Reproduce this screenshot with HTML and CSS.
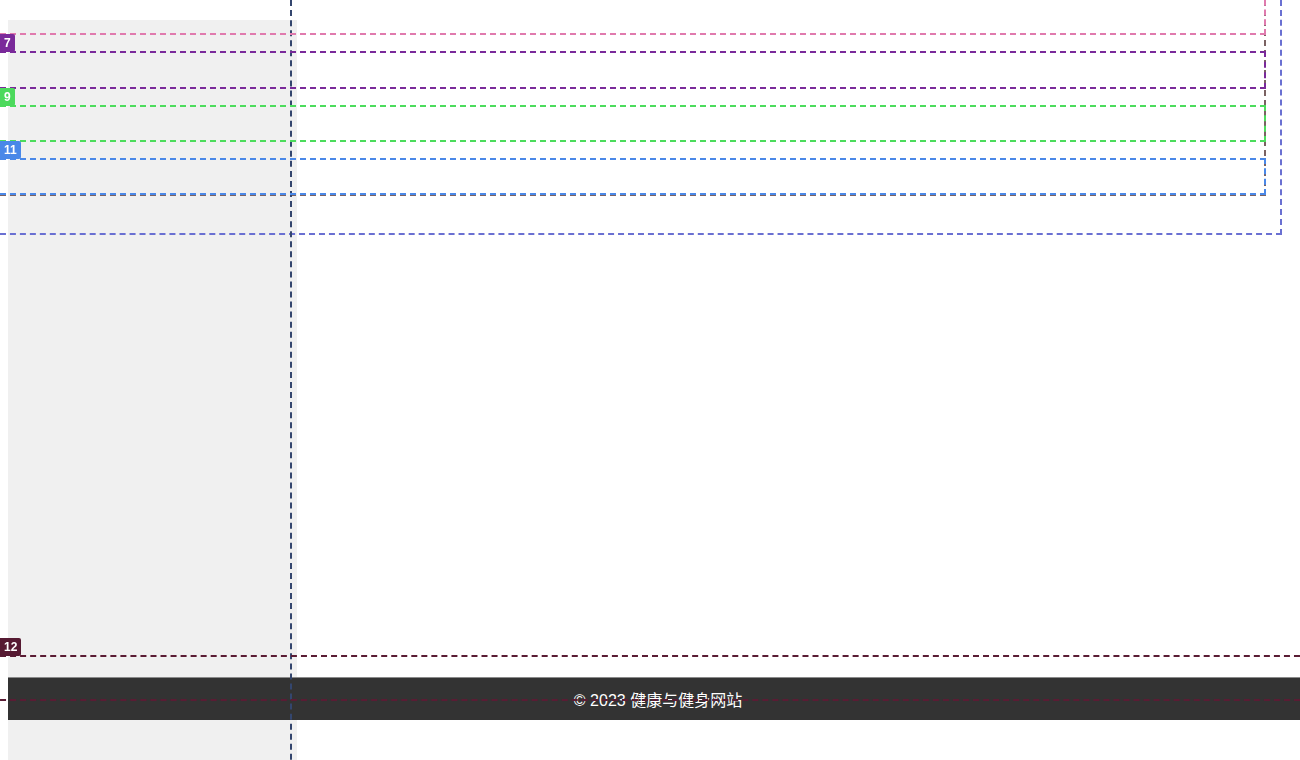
FILE: index.html
```html
<!DOCTYPE html>
<html lang="zh-CN">
<head>
<meta charset="utf-8">
<title>健康与健身网站</title>
<link rel="stylesheet" href="styles.css">
</head>
<body>
<div class="page">
  <aside class="sidebar"></aside>
  <main class="main"></main>
  <footer class="footer">© 2023 健康与健身网站</footer>
</div>

<div class="overlay">
  <div class="ol ol-parent"></div>
  <div class="ol ol-outer"></div>
  <div class="ol ol-side"></div>
  <div class="ol ol-pink"></div>
  <div class="ol ol-purple"></div>
  <div class="ol ol-green"></div>
  <div class="ol ol-blue"></div>
  <div class="ol ol-maroon"></div>
  <span class="tag tag-7">7</span>
  <span class="tag tag-9">9</span>
  <span class="tag tag-11">11</span>
  <span class="tag tag-12">12</span>
</div>
</body>
</html>
```

FILE: styles.css
```css
html {
  overflow: hidden;
}

body {
  margin: 0 0 0 8px;
  padding-top: 20px;
  background: #ffffff;
  font-family: "Liberation Sans", Arial, "Noto Sans CJK SC", sans-serif;
}

.page {
  display: grid;
  grid-template-columns: 289px 1fr;
  grid-template-rows: 657px 43px 40px;
}

.sidebar {
  grid-column: 1;
  grid-row: 1 / -1;
  background: #f0f0f0;
}

.main {
  grid-column: 2;
  grid-row: 1;
}

.footer {
  grid-column: 1 / -1;
  grid-row: 2;
  z-index: 1;
  box-sizing: border-box;
  padding-left: 8px;
  border-top: 1px solid #8a8a8a;
  background: #333333;
  color: #ffffff;
  font-size: 16px;
  display: flex;
  align-items: center;
  justify-content: center;
}

/* debug overlay */
.overlay {
  position: fixed;
  inset: 0;
  pointer-events: none;
  z-index: 5;
}

.ol {
  position: absolute;
  box-sizing: border-box;
  border: 2px dashed;
}

.ol-parent {
  left: -10px;
  top: -10px;
  width: 1276px;
  height: 206px;
  border-color: #7a6262;
}

.ol-outer {
  left: -10px;
  top: -10px;
  width: 1292px;
  height: 245px;
  border-color: #6a70d2;
}

.ol-side {
  left: -10px;
  top: -10px;
  width: 302px;
  height: 800px;
  border-color: #34466e;
}

.ol-pink {
  left: -10px;
  top: -10px;
  width: 1276px;
  height: 45px;
  border-color: #e07aae;
}

.ol-purple {
  left: -10px;
  top: 51px;
  width: 1276px;
  height: 38px;
  border-color: #7a2a9a;
}

.ol-green {
  left: -10px;
  top: 105px;
  width: 1276px;
  height: 37px;
  border-color: #4cdc5c;
}

.ol-blue {
  left: -10px;
  top: 158px;
  width: 1276px;
  height: 37px;
  border-color: #4a88e8;
}

.ol-maroon {
  left: -10px;
  top: 655px;
  width: 1320px;
  height: 46px;
  border-color: #5a1c34;
}

.tag {
  position: absolute;
  left: 0;
  height: 18px;
  line-height: 18px;
  padding: 0 4px;
  color: #ffffff;
  font-size: 12px;
  font-weight: bold;
  border-radius: 0 2px 2px 0;
}

.tag-7 {
  top: 34px;
  background: #7a2a9a;
}

.tag-9 {
  top: 88px;
  background: #4cd95c;
}

.tag-11 {
  top: 141px;
  background: #4a88e8;
}

.tag-12 {
  top: 638px;
  background: #561a32;
}
```
